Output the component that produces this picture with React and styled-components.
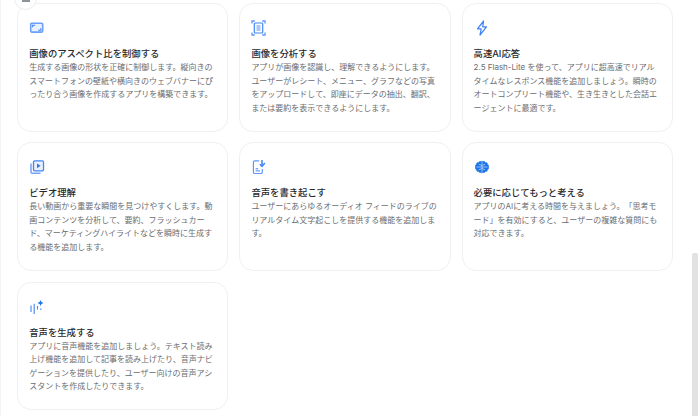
import React from "react";
import styled, { createGlobalStyle } from "styled-components";

const Global = createGlobalStyle`
  html, body { margin: 0; padding: 0; background: #fff; overflow: hidden; }
  body { width: 700px; height: 416px; }
`;

const Page = styled.div`
  position: relative;
  width: 700px;
  height: 416px;
  overflow: hidden;
  box-sizing: border-box;
  border-left: 1px solid #f3f3f3;
  background: #fff;
  font-family: "Inter", "Noto Sans CJK JP", sans-serif;
  text-spacing-trim: space-all;
`;

const Grid = styled.div`
  display: grid;
  grid-template-columns: repeat(3, 211.3px);
  grid-auto-rows: 128.2px;
  column-gap: 10.9px;
  row-gap: 10.9px;
  padding: 3.4px 0 0 16.2px;
`;

const Card = styled.article`
  box-sizing: border-box;
  border: 1px solid #f0f0f0;
  border-radius: 14px;
  background: #fff;
  padding: 13px 11px 0;
  display: flex;
  flex-direction: column;
`;

const IconSlot = styled.div`
  height: 22px;
  margin-bottom: 8px;
  display: flex;
  align-items: center;
`;

const Title = styled.h3`
  margin: 0;
  font-size: 9.35px;
  line-height: 14px;
  font-weight: 500;
  color: #28292c;
`;

const Body = styled.p`
  margin: 0;
  font-size: 8px;
  line-height: 13.5px;
  font-weight: 400;
  color: #6a6d71;
`;

const FloatButton = styled.div`
  position: absolute;
  left: 13px;
  top: -13px;
  width: 23px;
  height: 23px;
  border: 1px solid #ececec;
  border-radius: 50%;
  background: #fff;
  display: flex;
  align-items: flex-end;
  justify-content: center;
  padding-bottom: 7px;
  box-sizing: border-box;
`;

const Glyph = styled.span`
  display: block;
  width: 8px;
  height: 3px;
  background: #8f9499;
`;

const Scrollbar = styled.div`
  position: absolute;
  left: 691px;
  top: 253px;
  width: 6px;
  height: 163px;
  border-radius: 2px 2px 0 0;
  background: #e2e2e2;
`;

const Svg = ({ children }) => (
  <svg width="16" height="16" viewBox="0 0 16 16" fill="none" stroke="#4285f4" strokeWidth="1.2">
    {children}
  </svg>
);

const AspectIcon = () => (
  <Svg>
    <rect x="1.7" y="3.3" width="12" height="8.800" rx="1" stroke="#6c9ff8" strokeWidth="1.600" fill="#eaf1fe" />
    <path d="M3.600 7.200V5.200H6.200M11.800 8.200v2H9.200" stroke="#4285f4" strokeWidth="1.100" />
  </Svg>
);

const ScanIcon = () => (
  <Svg>
    <path d="M1 3.500V1h2.800M11.200 1H14v2.500M14 12.500V15h-2.800M3.800 15H1v-2.500" stroke="#5f99f7" strokeWidth="1.300" />
    <rect x="3.300" y="3" width="8.400" height="10" rx="1" />
    <path d="M5.500 6h4M5.500 8h4M5.500 10h4" strokeWidth="0.900" />
  </Svg>
);

const BoltIcon = () => (
  <Svg>
    <path d="M9.600 1L3.500 8.800h3.700L6 15l6.500-8.200H8.700z" strokeLinejoin="round" strokeWidth="1.250" />
  </Svg>
);

const VideoIcon = () => (
  <Svg>
    <path d="M2 4.600v8.400c0 .8.500 1.300 1.300 1.300H11.500" stroke="#74a4f8" strokeWidth="1.500" />
    <rect x="4.500" y="1.800" width="10" height="10" rx="1.200" fill="#eaf1fe" strokeWidth="1.300" />
    <path d="M8 4.400v4.800l3.600-2.400z" fill="#3277ee" stroke="none" />
  </Svg>
);

const TranscribeIcon = () => (
  <Svg>
    <path d="M8.200 1.900H3.700c-.8 0-1.300.5-1.300 1.300v10c0 .8.500 1.300 1.300 1.300h6.300c.8 0 1.300-.5 1.300-1.300V10" stroke="#5f99f7" strokeWidth="1.200" />
    <path d="M4.600 9.800h2.600M4.600 11.900h4.400" strokeWidth="1" />
    <path d="M11 1v6.200M8.900 5.200L11 7.400l2.900-3.400" strokeWidth="1.500" />
  </Svg>
);

const BrainIcon = () => (
  <Svg>
    <path d="M5.600 2.400h4.800l1.200 1.300h1.300l.6 1.500 1 1v3.600l-1 1-.6 1.500h-1.300l-1.200 1.300H5.600l-1.200-1.300H3.100l-.6-1.500-1-1V6.200l1-1 .6-1.500h1.300z" fill="#1a73e8" stroke="#1a73e8" strokeWidth="0.600" strokeLinejoin="round" />
    <path d="M8 2.800v10.400M2.500 8h11M4.800 5.200 8 6.500l3.200-1.300M4.800 10.800 8 9.500l3.200 1.300" stroke="#b7d2fb" strokeWidth="0.800" />
  </Svg>
);

const AudioIcon = () => (
  <Svg>
    <path d="M2 6.500v6.500M5.200 4.800v10.200M8.500 7v3.500M11.800 9.500v1.500" stroke="#4285f4" strokeWidth="1.100" />
    <path d="M11.500 1l.9 2.100 2.100.9-2.100.9-.9 2.100-.9-2.100-2.100-.9 2.100-.9z" fill="#1a73e8" stroke="none" />
  </Svg>
);

const cards = [
  { Icon: AspectIcon, title: "画像のアスペクト比を制御する", body: "生成する画像の形状を正確に制御します。縦向きのスマートフォンの壁紙や横向きのウェブバナーにぴったり合う画像を作成するアプリを構築できます。" },
  { Icon: ScanIcon, title: "画像を分析する", body: "アプリが画像を認識し、理解できるようにします。ユーザーがレシート、メニュー、グラフなどの写真をアップロードして、即座にデータの抽出、翻訳、または要約を表示できるようにします。" },
  { Icon: BoltIcon, title: "高速AI応答", body: "2.5 Flash-Lite を使って、アプリに超高速でリアルタイムなレスポンス機能を追加しましょう。瞬時のオートコンプリート機能や、生き生きとした会話エージェントに最適です。" },
  { Icon: VideoIcon, title: "ビデオ理解", body: "長い動画から重要な瞬間を見つけやすくします。動画コンテンツを分析して、要約、フラッシュカード、マーケティングハイライトなどを瞬時に生成する機能を追加します。" },
  { Icon: TranscribeIcon, title: "音声を書き起こす", body: "ユーザーにあらゆるオーディオ フィードのライブのリアルタイム文字起こしを提供する機能を追加します。" },
  { Icon: BrainIcon, title: "必要に応じてもっと考える", body: "アプリのAIに考える時間を与えましょう。「思考モード」を有効にすると、ユーザーの複雑な質問にも対応できます。" },
  { Icon: AudioIcon, title: "音声を生成する", body: "アプリに音声機能を追加しましょう。テキスト読み上げ機能を追加して記事を読み上げたり、音声ナビゲーションを提供したり、ユーザー向けの音声アシスタントを作成したりできます。" },
];

export default function App() {
  return (
    <Page>
      <Global />
      <Grid>
        {cards.map(({ Icon, title, body }) => (
          <Card key={title}>
            <IconSlot><Icon /></IconSlot>
            <Title>{title}</Title>
            <Body>{body}</Body>
          </Card>
        ))}
      </Grid>
      <FloatButton><Glyph /></FloatButton>
      <Scrollbar />
    </Page>
  );
}
